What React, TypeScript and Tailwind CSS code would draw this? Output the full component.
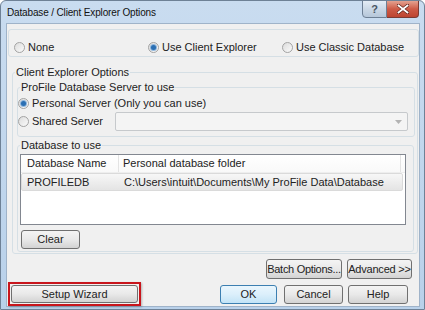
import React from "react";

function Radio({checked = false, label, className = ""}: {checked?: boolean; label: string; className?: string}) {
  return (
    <span className={`flex items-center gap-[3px] whitespace-nowrap ${className}`}>
      <span className="w-[11px] h-[11px] shrink-0 rounded-full border border-[#a3a3a3] bg-linear-to-br from-[#dcdcdc] to-[#fbfbfb] flex items-center justify-center">
        {checked && <span className="w-[5px] h-[5px] rounded-full bg-[#2b6fb3] ring-1 ring-[#8fb6dc]"/>}
      </span>
      <span className="leading-[13px]">{label}</span>
    </span>
  );
}

function Btn({children, className = "", primary = false}: {children: React.ReactNode; className?: string; primary?: boolean}) {
  const skin = primary
    ? "border-[#3c7fb1] from-[#eaf6fd] via-[#dbeffb] to-[#c2e3f6]"
    : "border-[#707070] from-[#f4f4f4] via-[#e9e9e9] to-[#d3d3d3]";
  return (
    <div className={`shrink-0 whitespace-nowrap border rounded-[3px] bg-linear-to-b ${skin} flex items-center justify-center text-[11px] leading-[13px] text-[#222] ${className}`}>
      {children}
    </div>
  );
}

function Group({title, className = "", children}: {title: string; className?: string; children: React.ReactNode}) {
  return (
    <fieldset className={`border border-[#d5dfe5] rounded-[3px] p-0 ${className}`}>
      <legend className="ml-[2px] px-[1px] text-[11px] leading-[13px]">{title}</legend>
      {children}
    </fieldset>
  );
}

export default function App() {
  return (
    <div className="w-[425px] h-[310px] bg-linear-to-b from-[#c9dcf0] to-[#b9d1ea] border border-[#6e8196] rounded-t-[6px] flex flex-col font-['Liberation_Sans',Arial,sans-serif] text-[#222] overflow-hidden">
      {/* title bar */}
      <div className="h-[22px] flex items-start justify-between">
        <span className="pl-[6px] pt-[5px] text-[10px] leading-[13px] tracking-[-0.15px] text-[#111]">Database / Client Explorer Options</span>
        <div className="flex pr-[5px] -mt-[1px]">
          <div className="w-[25px] h-[18px] border border-[#6d7f94] rounded-bl-[4px] bg-linear-to-b from-[#e4ecf5] via-[#cbd8e6] to-[#b6c7da] flex items-center justify-center text-[11px] font-bold text-[#4a5563]">?</div>
          <div className="w-[32px] h-[18px] border border-l-0 border-[#7b3a33] rounded-br-[4px] bg-linear-to-b from-[#e3a190] via-[#cd5a46] to-[#bd4431] flex items-center justify-center">
            <svg width="12" height="10" viewBox="0 0 12 10">
              <path d="M1.5 1.5 L10.5 8.5 M10.5 1.5 L1.5 8.5" stroke="#5a1f18" strokeWidth="3.2" strokeLinecap="square"/>
              <path d="M1.5 1.5 L10.5 8.5 M10.5 1.5 L1.5 8.5" stroke="#ffffff" strokeWidth="1.8" strokeLinecap="square"/>
            </svg>
          </div>
        </div>
      </div>

      {/* client area */}
      <div className="ml-[5px] mr-[4px] h-[284px] bg-[#f0f0f0] border border-[#9fb3c9] flex flex-col text-[11px]">
        {/* mode choice */}
        <div className="mt-[5px] ml-[1px] h-[28px] border border-[#d5dfe5] rounded-[3px] flex items-start pt-[11px] pl-[5px]">
          <Radio label="None" className="w-[134px]"/>
          <Radio checked label="Use Client Explorer" className="w-[134px]"/>
          <Radio label="Use Classic Database"/>
        </div>

        <Group title="Client Explorer Options" className="mt-[9px] ml-[5px] mr-[1px] pb-[1px]">
          <Group title="ProFile Database Server to use" className="mt-[2px] ml-[4px] mr-[2px] pb-[5px]">
            <Radio checked label="Personal Server (Only you can use)" className="mt-[3px] h-[13px]"/>
            <div className="mt-[2px] h-[19px] flex items-center">
              <Radio label="Shared Server" className="w-[97px]"/>
              <div className="w-[293px] h-[19px] border border-[#c6c9cc] rounded-[2px] bg-[#f4f4f4] flex items-center justify-end pr-[5px]">
                <svg width="7" height="4" viewBox="0 0 7 4"><path d="M0 0 H7 L3.5 4 Z" fill="#b3b3b3"/></svg>
              </div>
            </div>
          </Group>

          <Group title="Database to use" className="mt-[2px] ml-[4px] mr-[3px] pb-[2px]">
            <div className="mt-[2px] ml-[2px] w-[386px] h-[71px] bg-white border border-[#828790] flex flex-col">
              <div className="h-[18px] flex items-center border-b border-[#eeeeee] bg-linear-to-b from-white to-[#f9f9f9]">
                <span className="w-[98px] h-full flex items-center pl-[6px] border-r border-[#e3e3e3]">Database Name</span>
                <span className="w-[282px] h-full flex items-center pl-[4px] border-r border-[#e3e3e3]">Personal database folder</span>
              </div>
              <div className="h-[18px] w-[382px] flex items-center whitespace-nowrap bg-linear-to-b from-[#f7f7f7] to-[#e4e4e4] border border-[#dadada] rounded-[2px]">
                <span className="w-[97px] pl-[5px]">PROFILEDB</span>
                <span className="pl-[5px]">C:\Users\intuit\Documents\My ProFile Data\Database</span>
              </div>
            </div>
            <Btn className="mt-[5px] ml-[3px] w-[59px] h-[19px]">Clear</Btn>
          </Group>
        </Group>

        {/* batch / advanced */}
        <div className="mt-[5px] flex justify-end gap-[5px] pr-[7px]">
          <Btn className="w-[76px] h-[20px] tracking-[-0.3px]">Batch Options...</Btn>
          <Btn className="w-[65px] h-[20px] tracking-[-0.2px]">Advanced &gt;&gt;</Btn>
        </div>

        {/* bottom buttons */}
        <div className="mt-[3px] flex items-center">
          <div className="ml-[1px] border-2 border-[#c8151c] p-[1px] shadow-[1px_1px_2px_rgba(0,0,0,0.25)]">
            <Btn className="w-[127px] h-[18px]">Setup Wizard</Btn>
          </div>
          <Btn primary className="ml-[79px] w-[57px] h-[19px]">OK</Btn>
          <Btn className="ml-[7px] w-[59px] h-[19px]">Cancel</Btn>
          <Btn className="ml-[5px] w-[60px] h-[19px]">Help</Btn>
        </div>
      </div>
    </div>
  );
}
